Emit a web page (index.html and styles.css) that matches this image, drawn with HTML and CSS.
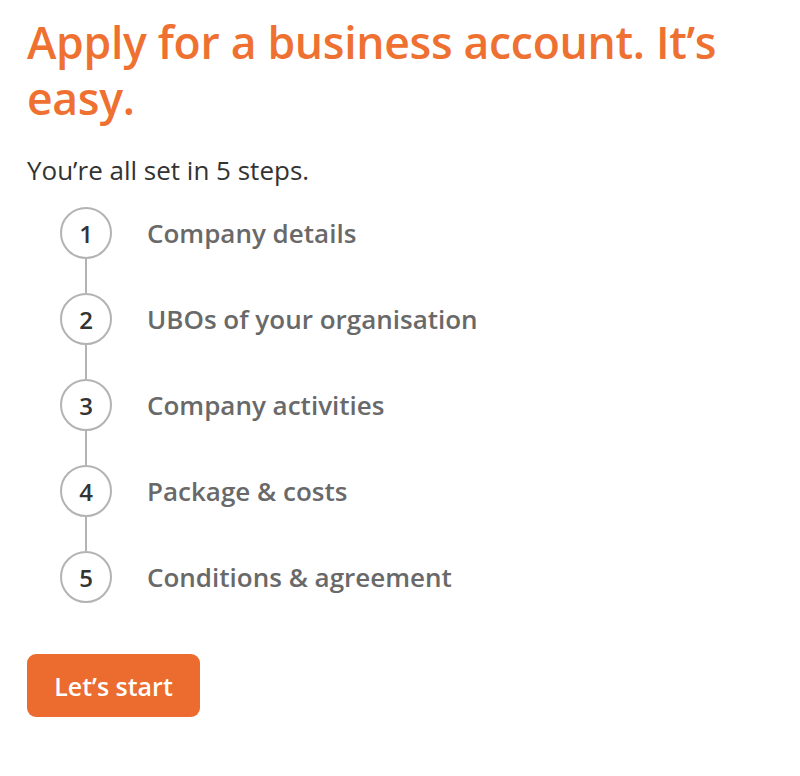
FILE: index.html
```html
<!DOCTYPE html>
<html lang="en">
<head>
<meta charset="utf-8">
<link rel="stylesheet" href="styles.css">
</head>
<body>
<main class="page">
  <h1 class="title">Apply for a business account. It’s easy.</h1>
  <p class="intro">You’re all set in 5 steps.</p>
  <ol class="steps">
    <li class="step"><span class="num">1</span><span class="label">Company details</span></li>
    <li class="link"></li>
    <li class="step"><span class="num">2</span><span class="label">UBOs of your organisation</span></li>
    <li class="link"></li>
    <li class="step"><span class="num">3</span><span class="label">Company activities</span></li>
    <li class="link"></li>
    <li class="step"><span class="num">4</span><span class="label">Package &amp; costs</span></li>
    <li class="link"></li>
    <li class="step"><span class="num">5</span><span class="label">Conditions &amp; agreement</span></li>
  </ol>
  <button class="start" type="button">Let’s start</button>
</main>
</body>
</html>
```

FILE: styles.css
```css
html, body {
  margin: 0;
  padding: 0;
  background: #ffffff;
}
body {
  font-family: "Open Sans", "Noto Sans", sans-serif;
}
.page {
  padding: 14px 26px 0 27px;
}
.title {
  margin: 0;
  font-size: 44.5px;
  line-height: 56px;
  font-weight: 600;
  color: #ee7131;
  letter-spacing: -0.3px;
}
.intro {
  margin: 28px 0 0;
  font-size: 26px;
  line-height: 32px;
  color: #333333;
}
.steps {
  list-style: none;
  margin: 21px 0 0 33px;
  padding: 0;
  display: flex;
  flex-direction: column;
}
.step {
  display: flex;
  align-items: center;
  height: 52px;
}
.num {
  box-sizing: border-box;
  width: 52px;
  height: 52px;
  border: 2.5px solid #b3b3b3;
  border-radius: 50%;
  display: flex;
  align-items: center;
  justify-content: center;
  font-size: 24px;
  font-weight: 600;
  color: #333333;
}
.label {
  margin-left: 35px;
  font-size: 26px;
  font-weight: 600;
  color: #696969;
}
.link {
  width: 2px;
  height: 34px;
  margin-left: 25px;
  background: #b3b3b3;
}
.start {
  margin-top: 51px;
  width: 173px;
  height: 63px;
  border: none;
  border-radius: 9px;
  background: #ec6b2e;
  color: #ffffff;
  font-family: inherit;
  font-size: 25px;
  font-weight: 600;
  padding: 0;
}
```
